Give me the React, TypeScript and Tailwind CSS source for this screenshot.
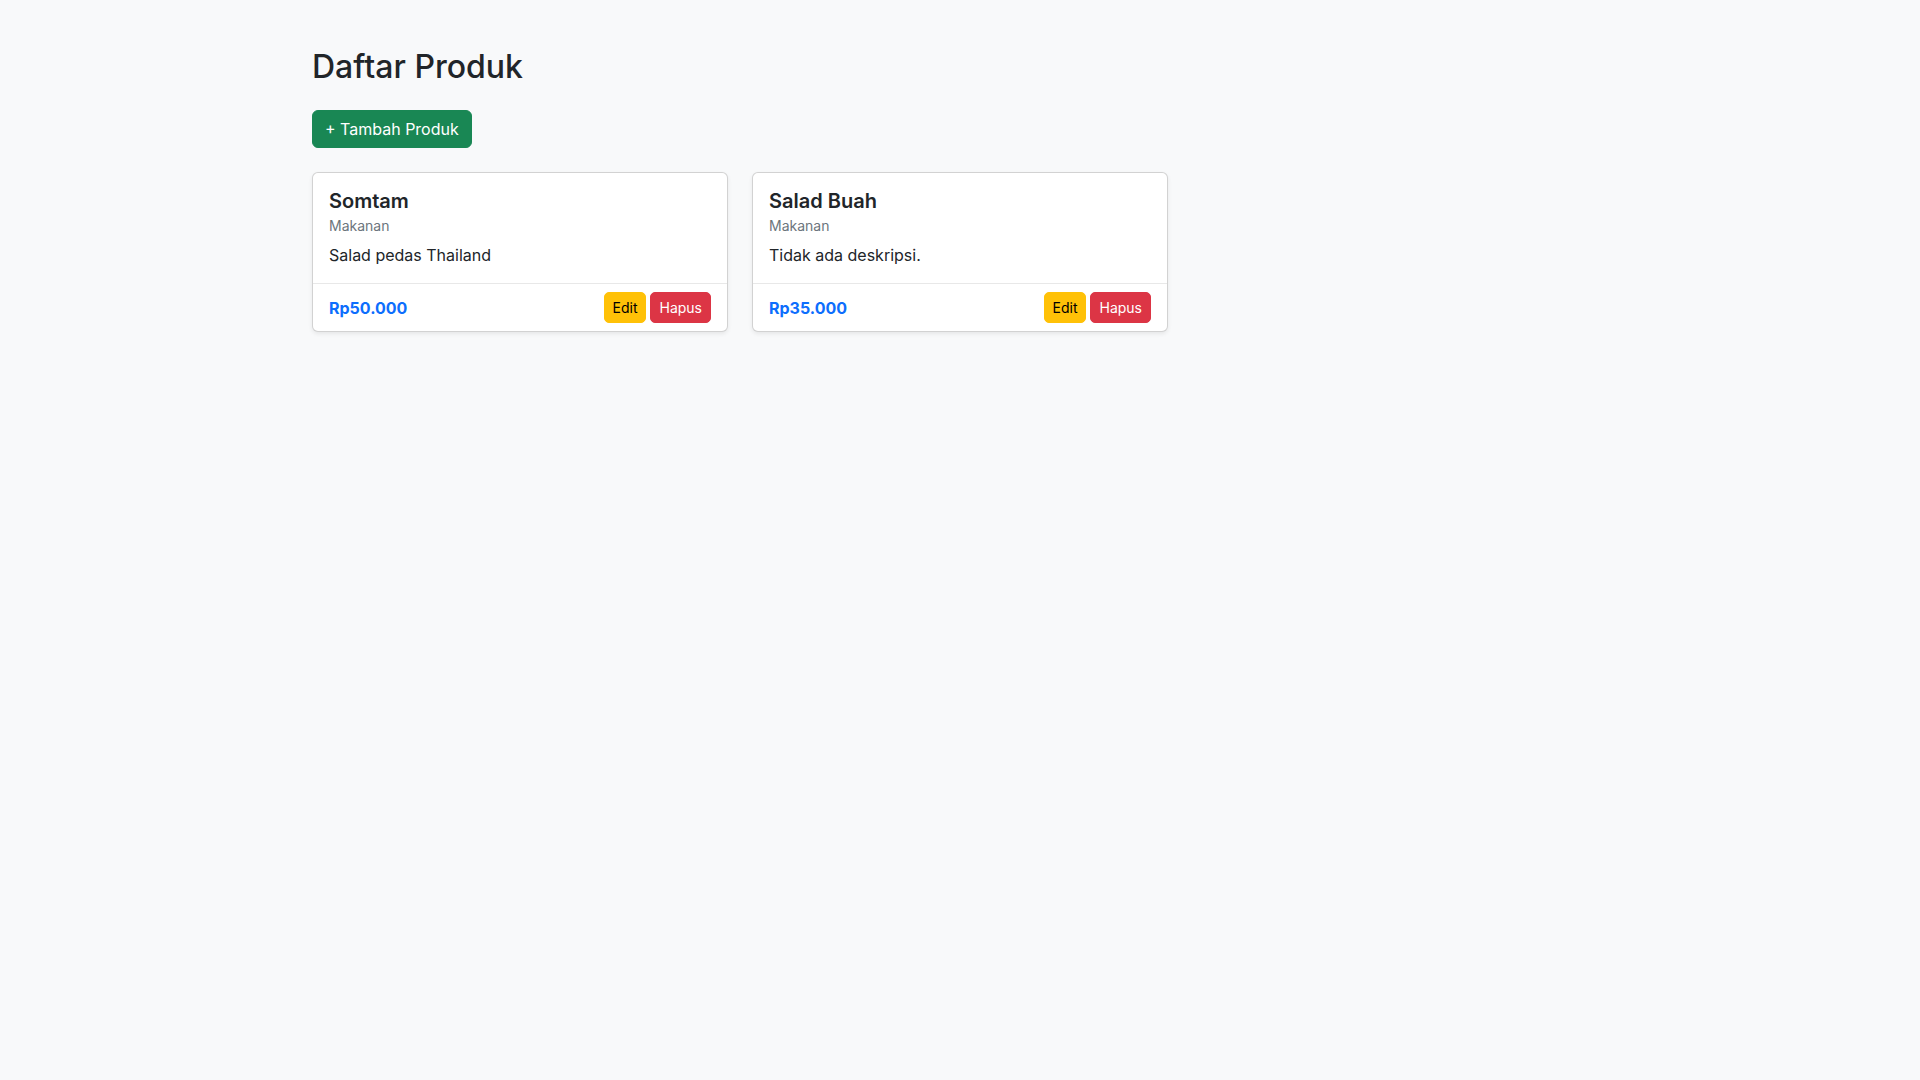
import React from 'react';

const products = [
  { name: 'Somtam', category: 'Makanan', desc: 'Salad pedas Thailand', price: 'Rp50.000' },
  { name: 'Salad Buah', category: 'Makanan', desc: 'Tidak ada deskripsi.', price: 'Rp35.000' },
];

export default function App() {
  return (
    <div className="min-h-screen bg-[#f8f9fa] text-[#212529] font-['Inter',sans-serif]">
      <div className="max-w-[1320px] mx-auto px-3 pt-12">
        <h2 className="text-[32px] leading-[1.2] font-medium mb-6">Daftar Produk</h2>

        <button className="bg-[#198754] text-white text-base leading-6 px-3 py-1.5 border border-[#198754] rounded-md mb-6">
          + Tambah Produk
        </button>

        <div className="grid grid-cols-3 gap-6">
          {products.map((p, idx) => (
            <div
              key={idx}
              className="bg-white border border-black/[0.175] rounded-md shadow-[0_2px_4px_rgba(0,0,0,0.075)] flex flex-col"
            >
              <div className="p-4">
                <h5 className="text-xl leading-6 font-semibold mb-2">{p.name}</h5>
                <h6 className="text-sm leading-[18px] font-normal text-[#6c757d] -mt-1 mb-2">{p.category}</h6>
                <p className="text-base leading-6">{p.desc}</p>
              </div>
              <div className="border-t border-black/[0.09] px-4 py-2 flex items-center justify-between">
                <span className="font-bold text-[#0d6efd]">{p.price}</span>
                <div className="flex gap-1">
                  <button className="bg-[#ffc107] text-black text-sm leading-[21px] px-2 py-1 border border-[#ffc107] rounded-[5px]">
                    Edit
                  </button>
                  <button className="bg-[#dc3545] text-white text-sm leading-[21px] px-2 py-1 border border-[#dc3545] rounded-[5px]">
                    Hapus
                  </button>
                </div>
              </div>
            </div>
          ))}
        </div>
      </div>
    </div>
  );
}
